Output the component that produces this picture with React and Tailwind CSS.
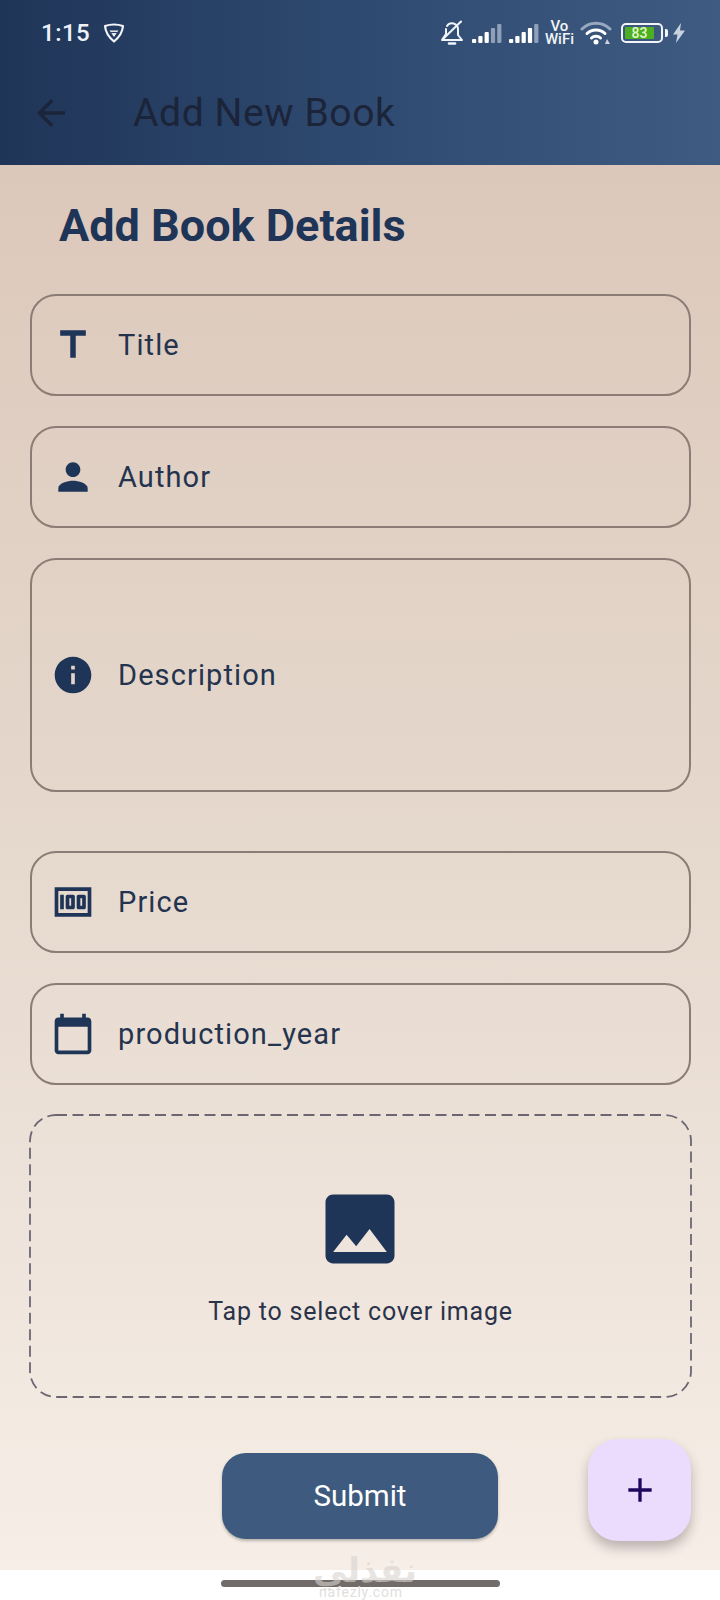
import React from "react";

const NAVY = "#1f3558";
const Icon = ({ d, className = "w-[44px] h-[44px]", fill = NAVY, fillRule }) => (
  <svg viewBox="0 0 24 24" className={className} fill={fill}>
    <path d={d} fillRule={fillRule} />
  </svg>
);

const P = {
  title: "M5 4v3h5.5v12h3V7H19V4z",
  person: "M12 12c2.21 0 4-1.79 4-4s-1.79-4-4-4-4 1.79-4 4 1.79 4 4 4zm0 2c-2.67 0-8 1.34-8 4v2h16v-2c0-2.66-5.33-4-8-4z",
  info: "M12 2C6.48 2 2 6.48 2 12s4.48 10 10 10 10-4.48 10-10S17.52 2 12 2zm1 15h-2v-6h2v6zm0-8h-2V7h2v2z",
  money: "M5 8h2v8H5zm7 0H9c-.55 0-1 .45-1 1v6c0 .55.45 1 1 1h3c.55 0 1-.45 1-1V9c0-.55-.45-1-1-1zm-1 6h-1v-4h1v4zm7-6h-3c-.55 0-1 .45-1 1v6c0 .55.45 1 1 1h3c.55 0 1-.45 1-1V9c0-.55-.45-1-1-1zm-1 6h-1v-4h1v4zM2 4v16h20V4H2zm2 14V6h16v12H4z",
  cal: "M20 3h-1V1h-2v2H7V1H5v2H4c-1.1 0-2 .9-2 2v16c0 1.1.9 2 2 2h16c1.1 0 2-.9 2-2V5c0-1.1-.9-2-2-2zm0 18H4V8h16v13z",
  image: "M21 19V5c0-1.1-.9-2-2-2H5c-1.1 0-2 .9-2 2v14c0 1.1.9 2 2 2h14c1.1 0 2-.9 2-2zM8.5 13.5l2.5 3.01L14.5 12l4.5 6H5l3.5-4.5z",
  back: "M20 11H7.83l5.59-5.59L12 4l-8 8 8 8 1.41-1.41L7.83 13H20v-2z",
  add: "M19 13h-6v6h-2v-6H5v-2h6V5h2v6h6v2z",
};

const Field = ({ icon, label, h = "h-[102px]", mt = "mt-[30px]", fillRule }) => (
  <div className={`${h} ${mt} w-[661px] shrink-0 rounded-[26px] border-2 border-[#8b7d76] flex items-center pl-[19px]`}>
    <Icon d={icon} fillRule={fillRule} />
    <span className="ml-[23px] text-[29px] tracking-[1.1px] text-[#24344f] leading-none">{label}</span>
  </div>
);

const Signal = ({ strong = 3 }) => {
  const bars = [
    [0, 16, 4],
    [6.3, 13, 7],
    [12.6, 9, 11],
    [18.9, 5, 15],
    [25.2, 1, 19],
  ];
  return (
    <svg viewBox="0 0 30 20" className="w-[30px] h-[20px]">
      {bars.map(([x, y, h], i) => (
        <rect key={i} x={x} y={y} width="4.2" height={h} rx="1" fill={i < strong ? "#fff" : "#8fa0b8"} />
      ))}
    </svg>
  );
};

export default function App() {
  return (
    <div className="relative w-[720px] h-[1600px] overflow-hidden bg-white flex flex-col font-['Roboto','Liberation_Sans',sans-serif]">
      <header className="h-[165px] shrink-0 flex flex-col bg-gradient-to-r from-[#1f3558] via-[#2f4a70] to-[#3f5b82]">
        <div className="h-[66px] flex items-center pl-[41px] pr-[34px] text-white">
          <span className="text-[24px] font-medium tracking-[0.5px] leading-none text-[#eef2f8]">1:15</span>
          <svg viewBox="0 0 22 20" className="ml-[13px] w-[22px] h-[20px]" fill="none" stroke="#f1f4f8" strokeWidth="2.2" strokeLinejoin="round">
            <path d="M2 3c6-2 12-2 18 0-.5 6-3.500 11-9 15.500C5.500 14 2.500 9 2 3z" />
            <path d="M6.500 7.500h9L11 14z" fill="#f1f4f8" stroke="none" />
            <path d="M6 9.500h10" stroke="#2a4268" strokeWidth="1.200" />
          </svg>
          <div className="ml-auto flex items-center">
            <svg viewBox="0 0 24 26" className="w-[24px] h-[26px]" fill="none" stroke="#f1f4f8" strokeWidth="2" strokeLinejoin="round" strokeLinecap="round">
              <path d="M7 6a6 6 0 0 1 11 3v6l4 5H2l4-6V9" />
              <path d="M9 23.500h6" strokeWidth="2.500" />
              <path d="M3 19L21 1.500" />
            </svg>
            <div className="ml-[8px]"><Signal strong={3} /></div>
            <div className="ml-[7px]"><Signal strong={4} /></div>
            <div className="ml-[6px] flex flex-col items-center text-[#f1f4f8] text-[15px] leading-[13px] font-medium">
              <span>Vo</span>
              <span>WiFi</span>
            </div>
            <svg viewBox="0 0 32 24" className="ml-[6px] w-[32px] h-[24px]" fill="none" strokeLinecap="round">
              <path d="M2 8a20 20 0 0 1 28 0" stroke="#98a8bf" strokeWidth="3" />
              <path d="M7 12.500a13 13 0 0 1 18 0" stroke="#fff" strokeWidth="3" />
              <path d="M11.500 17a6.500 6.500 0 0 1 9 0" stroke="#fff" strokeWidth="3" />
              <circle cx="16" cy="21" r="2.500" fill="#fff" />
              <path d="M27 18l3 5h-5z" fill="#c9d2df" />
            </svg>
            <div className="ml-[9px] w-[42px] h-[20px] rounded-[5px] border-2 border-[#f1f4f8] p-[2px] flex">
              <div className="w-[29px] h-full rounded-[1px] bg-[#4caf22] flex items-center justify-center text-[14px] leading-none text-[#e4f7c8] font-medium">83</div>
            </div>
            <div className="ml-[2px] w-[3px] h-[8px] rounded-r-[2px] bg-[#f1f4f8]" />
            <svg viewBox="0 0 14 20" className="ml-[4px] w-[14px] h-[20px]" fill="#c9d2df">
              <path d="M9 0L1 11.500h4.500L4 20l9-12.500H8z" />
            </svg>
          </div>
        </div>
        <div className="flex-1 flex items-center pl-[30px] pb-[5px]">
          <Icon d={P.back} className="w-[42px] h-[42px]" fill="#1b2439" />
          <span className="ml-[61px] text-[39px] text-[#1b2439] tracking-[0.6px] leading-none">Add New Book</span>
        </div>
      </header>

      <main className="h-[1405px] shrink-0 bg-gradient-to-b from-[#dcc8bb] via-[#e6d9ce] to-[#f6eee7] flex flex-col pl-[30px]">
        <div className="h-[129px] shrink-0 flex items-center pl-[29px] pb-[9px]">
          <h1 className="text-[45px] font-bold text-[#1f3558] leading-none">Add Book Details</h1>
        </div>
        <Field icon={P.title} label="Title" mt="mt-0" />
        <Field icon={P.person} label="Author" />
        <Field icon={P.info} label="Description" h="h-[234px]" />
        <Field icon={P.money} label="Price" mt="mt-[59px]" fillRule="evenodd" />
        <Field icon={P.cal} label="production_year" />

        <div className="relative mt-[29px] -ml-[1px] w-[663px] h-[284px] shrink-0 flex flex-col items-center pt-[69px]">
          <svg className="absolute inset-0 w-full h-full" fill="none">
            <rect x="1" y="1" width="661" height="282" rx="26" stroke="#6b6672" strokeWidth="1.8" strokeDasharray="11 5.500" />
          </svg>
          <Icon d={P.image} className="w-[92px] h-[92px] -translate-x-[1px]" />
          <span className="mt-[24px] text-[25px] tracking-[0.8px] text-[#2a3349] leading-none">Tap to select cover image</span>
        </div>

        <button className="mt-[55px] ml-[192px] w-[276px] h-[86px] shrink-0 rounded-[24px] bg-[#3e5a7e] text-white text-[29.500px] flex items-center justify-center shadow-[0_2px_3px_rgba(0,0,0,0.25)]">
          Submit
        </button>
      </main>

      <div className="absolute left-[588px] top-[1439px] w-[103px] h-[102px] rounded-[30px] bg-[#ebdbfd] flex items-center justify-center shadow-[0_7px_12px_rgba(60,40,50,0.3)]">
        <Icon d={P.add} className="w-[40px] h-[40px]" fill="#22075e" />
      </div>

      <div className="absolute left-[221px] top-[1580px] w-[279px] h-[7px] rounded-full bg-[#716b69]" />
      <div className="absolute left-[310px] top-[1556px] w-[110px] text-center text-[34px] leading-[28px] font-['DejaVu_Sans',sans-serif] font-bold text-[#d9d2cd]/60" dir="rtl">نفذلي</div>
      <div className="absolute left-[319px] top-[1585px] text-[14px] leading-none tracking-[0.8px] text-[#e2dedc]">nafezly.com</div>
    </div>
  );
}
